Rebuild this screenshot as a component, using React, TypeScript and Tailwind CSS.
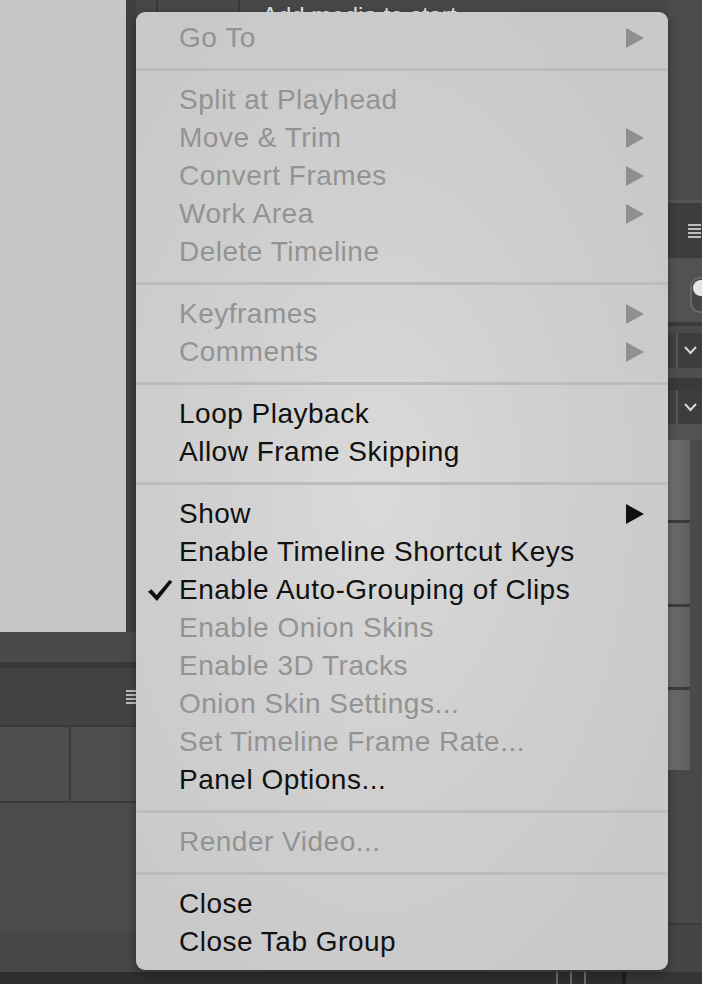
import React from 'react';

type Item =
  | { sep: true }
  | { sep?: false; label: string; disabled?: boolean; submenu?: boolean; checked?: boolean };

const items: Item[] = [
  { label: 'Go To', disabled: true, submenu: true },
  { sep: true },
  { label: 'Split at Playhead', disabled: true },
  { label: 'Move & Trim', disabled: true, submenu: true },
  { label: 'Convert Frames', disabled: true, submenu: true },
  { label: 'Work Area', disabled: true, submenu: true },
  { label: 'Delete Timeline', disabled: true },
  { sep: true },
  { label: 'Keyframes', disabled: true, submenu: true },
  { label: 'Comments', disabled: true, submenu: true },
  { sep: true },
  { label: 'Loop Playback' },
  { label: 'Allow Frame Skipping' },
  { sep: true },
  { label: 'Show', submenu: true },
  { label: 'Enable Timeline Shortcut Keys' },
  { label: 'Enable Auto-Grouping of Clips', checked: true },
  { label: 'Enable Onion Skins', disabled: true },
  { label: 'Enable 3D Tracks', disabled: true },
  { label: 'Onion Skin Settings...', disabled: true },
  { label: 'Set Timeline Frame Rate...', disabled: true },
  { label: 'Panel Options...' },
  { sep: true },
  { label: 'Render Video...', disabled: true },
  { sep: true },
  { label: 'Close' },
  { label: 'Close Tab Group' },
];

function Arrow({ disabled }: { disabled?: boolean }) {
  return (
    <svg width="18" height="20" viewBox="0 0 18 20" className={disabled ? 'fill-[#8f8f8f]' : 'fill-[#111111]'}>
      <path d="M0 0 L18 10 L0 20 Z" />
    </svg>
  );
}

function Check() {
  return (
    <svg width="25" height="21" viewBox="0 0 25 21" className="fill-[#111111]">
      <path d="M0 11.8 L3.4 9.2 L8.6 15 L21.4 0 L24.4 1.8 L9 21 Z" />
    </svg>
  );
}

function Hamburger({ className = '' }: { className?: string }) {
  return (
    <div className={`flex flex-col gap-[2px] ${className}`}>
      <div className="h-[2px] bg-[#bdbdbd]" />
      <div className="h-[2px] bg-[#bdbdbd]" />
      <div className="h-[2px] bg-[#bdbdbd]" />
      <div className="h-[2px] bg-[#bdbdbd]" />
    </div>
  );
}

function Chevron() {
  return (
    <svg width="13" height="9" viewBox="0 0 13 9" fill="none" stroke="#d8d8d8" strokeWidth="2">
      <path d="M1 1 L6.5 7 L12 1" />
    </svg>
  );
}

function Menu() {
  return (
    <div className="absolute left-[136px] top-[12px] w-[532px] rounded-[9px] bg-[radial-gradient(ellipse_at_45%_50%,#dadada_0%,#d0d0d0_40%,#c9c9c9_80%)] pt-[7px] pb-[9px] shadow-[0_3px_10px_rgba(0,0,0,0.35)] font-['Liberation_Sans',Arial,sans-serif] text-[28px] tracking-[0.5px]">
      {items.map((it, i) =>
        it.sep ? (
          <div key={i} className="h-[24px] pt-[11px]">
            <div className="h-[3px] bg-[#bcbcbc]" />
          </div>
        ) : (
          <div
            key={i}
            className={`relative flex h-[38px] items-center pl-[43px] pr-[24px] leading-[38px] ${
              it.disabled ? 'text-[#939393]' : 'text-[#111111]'
            }`}
          >
            {it.checked && (
              <div className="absolute left-[12px] top-[9px]">
                <Check />
              </div>
            )}
            <span className="flex-1 whitespace-nowrap">{it.label}</span>
            {it.submenu && <Arrow disabled={it.disabled} />}
          </div>
        )
      )}
    </div>
  );
}

export default function App() {
  return (
    <div className="relative h-[984px] w-[702px] overflow-hidden bg-[#474747]">
      <div className="flex h-[972px]">
        {/* left: canvas + lower panel */}
        <div className="flex w-[136px] flex-col">
          <div className="flex h-[632px]">
            <div className="w-[126px] bg-[#c6c6c6]" />
            <div className="flex-1 bg-[#3f3f3f]" />
          </div>
          <div className="h-[30px] bg-[#4a4a4a]" />
          <div className="h-[6px] bg-[#383838]" />
          <div className="flex h-[57px] items-center justify-end bg-[#424242]">
            <Hamburger className="w-[10px]" />
          </div>
          <div className="h-[2px] bg-[#393939]" />
          <div className="flex h-[74px] bg-[#4d4d4d]">
            <div className="w-[71px] border-r-2 border-[#3a3a3a]" />
          </div>
          <div className="h-[2px] bg-[#3a3a3a]" />
          <div className="h-[129px] bg-[#4b4b4b]" />
          <div className="flex-1 bg-[#464646]" />
        </div>

        {/* middle: behind the menu */}
        <div className="flex flex-1 flex-col">
          <div className="flex h-[12px] overflow-hidden bg-[#474747]">
            <div className="w-[22px] border-r-2 border-[#393939]" />
            <div className="w-[82px] border-r-2 border-[#393939]" />
            <div className="relative flex-1">
              <span className="absolute left-[22px] top-[-2px] whitespace-nowrap font-['Liberation_Sans',Arial,sans-serif] text-[24px] text-[#e4e4e4]">
                Add media to start
              </span>
            </div>
          </div>
          <div className="flex-1 bg-[#474747]" />
        </div>

        {/* right: side panels */}
        <div className="flex w-[34px] flex-col">
          <div className="h-[200px] bg-[#4b4b4b]" />
          <div className="h-[3px] bg-[#555555]" />
          <div className="flex h-[55px] items-center justify-end bg-[#3d3d3d]">
            <Hamburger className="mr-[1px] w-[13px]" />
          </div>
          <div className="flex h-[64px] items-start justify-end bg-[#525252] pt-[19px]">
            <div className="flex h-[36px] w-[12px] items-start rounded-l-[10px] border-2 border-r-0 border-[#6a6a6a] bg-[#454545] pl-[1px] pt-[1px]">
              <div className="h-[16px] w-[16px] shrink-0 rounded-full bg-[#e6e6e6]" />
            </div>
          </div>
          <div className="h-[4px] bg-[#3b3b3b]" />
          <div className="h-[7px] bg-[#4a4a4a]" />
          <div className="flex h-[35px] bg-[#404040]">
            <div className="w-[10px] border-r-2 border-[#555555]" />
            <div className="flex flex-1 items-center justify-center bg-[#3d3d3d]">
              <Chevron />
            </div>
          </div>
          <div className="h-[10px] bg-[#4e4e4e]" />
          <div className="h-[12px] bg-[#3a3a3a]" />
          <div className="flex h-[34px] bg-[#404040]">
            <div className="w-[10px] border-r-2 border-[#555555]" />
            <div className="flex flex-1 items-center justify-center bg-[#3d3d3d]">
              <Chevron />
            </div>
          </div>
          <div className="h-[16px] bg-[#525252]" />
          <div className="flex h-[330px]">
            <div className="flex w-[22px] flex-col gap-[3px] bg-[#3c3c3c]">
              <div className="flex-1 bg-[linear-gradient(90deg,#727272,#606060)]" />
              <div className="flex-1 bg-[linear-gradient(90deg,#6e6e6e,#5e5e5e)]" />
              <div className="flex-1 bg-[linear-gradient(90deg,#6e6e6e,#5e5e5e)]" />
              <div className="flex-1 bg-[linear-gradient(90deg,#6e6e6e,#5e5e5e)]" />
            </div>
            <div className="flex-1 bg-[#4a4a4a]" />
          </div>
          <div className="h-[153px] bg-[#484848]" />
          <div className="h-[2px] bg-[#3a3a3a]" />
          <div className="flex-1 bg-[#454545]" />
        </div>
      </div>

      {/* bottom status strip */}
      <div className="flex h-[12px] bg-[#2e2e2e]">
        <div className="w-[556px]" />
        <div className="w-[2px] bg-[#6a6a6a]" />
        <div className="w-[12px]" />
        <div className="w-[2px] bg-[#6a6a6a]" />
        <div className="w-[12px]" />
        <div className="w-[2px] bg-[#6a6a6a]" />
        <div className="w-[36px]" />
        <div className="w-[4px] bg-[#1e1e1e]" />
        <div className="flex-1 bg-[#353535]" />
      </div>

      <Menu />
    </div>
  );
}
